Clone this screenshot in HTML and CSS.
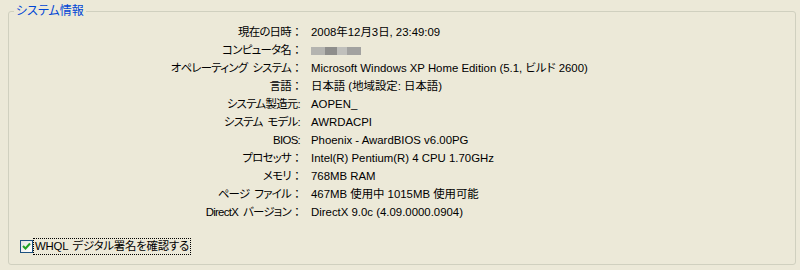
FILE: index.html
```html
<!DOCTYPE html>
<html lang="ja">
<head>
<meta charset="utf-8">
<link rel="stylesheet" href="styles.css">
</head>
<body>
<fieldset class="group">
  <legend class="group-title">システム情報</legend>
  <div class="info">
    <div class="label">現在の日時<span class="colon">：</span></div><div class="value">2008年12月3日, 23:49:09</div>
    <div class="label">コンピュータ名<span class="colon">：</span></div><div class="value"><span class="blur"><i class="b1"></i><i class="b2"></i><i class="b3"></i><i class="b4"></i></span></div>
    <div class="label">オペレーティング システム<span class="colon">：</span></div><div class="value">Microsoft Windows XP Home Edition (5.1, ビルド 2600)</div>
    <div class="label">言語<span class="colon">：</span></div><div class="value">日本語 (地域設定: 日本語)</div>
    <div class="label">システム製造元:<span class="pad"></span></div><div class="value">AOPEN_</div>
    <div class="label">システム モデル:<span class="pad"></span></div><div class="value">AWRDACPI</div>
    <div class="label">BIOS:<span class="pad"></span></div><div class="value">Phoenix - AwardBIOS v6.00PG</div>
    <div class="label">プロセッサ<span class="colon">：</span></div><div class="value">Intel(R) Pentium(R) 4 CPU 1.70GHz</div>
    <div class="label">メモリ<span class="colon">：</span></div><div class="value">768MB RAM</div>
    <div class="label">ページ ファイル<span class="colon">：</span></div><div class="value">467MB 使用中 1015MB 使用可能</div>
    <div class="label">DirectX バージョン<span class="colon">：</span></div><div class="value">DirectX 9.0c (4.09.0000.0904)</div>
  </div>
  <label class="check">
    <span class="box"><svg width="9" height="9" viewBox="0 0 9 9"><path d="M1 4 L3.5 6.5 L8 1.5" fill="none" stroke="#21a121" stroke-width="2"/></svg></span>
    <span class="check-text">WHQL デジタル署名を確認する</span>
  </label>
</fieldset>
</body>
</html>
```
FILE: styles.css
```css
html, body {
  margin: 0;
  padding: 0;
  background: #ECE9D8;
}
body {
  width: 800px;
  height: 270px;
  overflow: hidden;
  font-family: "Liberation Sans", "Noto Sans CJK JP", sans-serif;
  font-size: 11.4px;
  font-feature-settings: "palt";
  color: #000;
}
.group {
  box-sizing: border-box;
  margin: 4px 4px 0 8px;
  height: 261px;
  padding: 0;
  border: 1px solid #D0D0BF;
  border-radius: 3px;
}
.group-title {
  margin-left: 5px;
  padding: 0 2px;
  color: #0046D5;
  font-size: 12px;
  line-height: 14px;
  height: 14px;
}
.info {
  display: grid;
  grid-template-columns: 294px 1fr;
  column-gap: 8px;
  margin-top: 5px;
}
.label, .value {
  height: 18px;
  line-height: 18px;
  white-space: nowrap;
}
.label {
  text-align: right;
  letter-spacing: -0.7px;
  word-spacing: 2.5px;
}
.colon {
  display: inline-block;
  width: 12px;
  text-align: center;
  letter-spacing: 0;
  font-feature-settings: normal;
}
.pad {
  display: inline-block;
  width: 3px;
}
.blur {
  display: inline-flex;
  align-items: center;
  height: 18px;
  vertical-align: top;
}
.blur i {
  display: inline-block;
  height: 8px;
  margin-top: 1px;
}
.b1 { width: 14px; background: #b4b4b0; }
.b2 { width: 12px; background: #8e8e8c; }
.b3 { width: 10px; background: #c0c0bc; }
.b4 { width: 14px; background: #a2a2a0; }
.check {
  display: flex;
  align-items: center;
  margin: 16px 0 0 11px;
  height: 18px;
}
.box {
  box-sizing: border-box;
  width: 13px;
  height: 13px;
  border: 1px solid #1C5180;
  background: linear-gradient(135deg, #e4e4df, #ffffff);
  display: flex;
  align-items: center;
  justify-content: center;
}
.check-text {
  margin-left: 1px;
  padding: 0 1px;
  outline: 1px dotted #000;
  outline-offset: 0;
  line-height: 15px;
  letter-spacing: -0.2px;
  word-spacing: 1.5px;
}
```
